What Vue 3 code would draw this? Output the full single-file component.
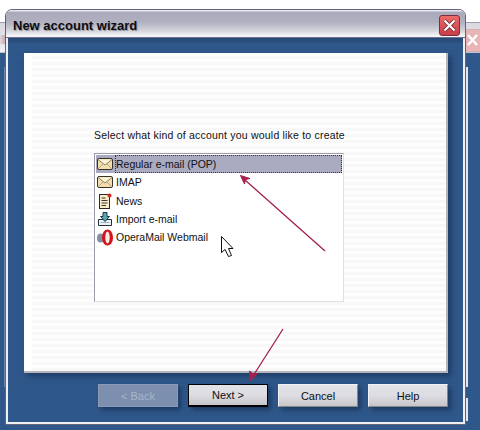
<script setup>
const rows = [
  { label: 'Regular e-mail (POP)', icon: 'mail', selected: true },
  { label: 'IMAP', icon: 'mail' },
  { label: 'News', icon: 'news' },
  { label: 'Import e-mail', icon: 'import' },
  { label: 'OperaMail Webmail', icon: 'opera' }
]
const buttons = [
  { label: '< Back', kind: 'disabled' },
  { label: 'Next >', kind: 'default' },
  { label: 'Cancel', kind: '' },
  { label: 'Help', kind: '' }
]
</script>

<template>
  <div class="stage">
    <div class="back-window">
      <div class="back-title"><span class="back-letter"></span></div>
      <div class="back-close">
        <svg width="14" height="20" viewBox="0 0 14 20">
          <path d="M2 5 L11 15 M11 5 L2 15" stroke="#fff" stroke-width="2.4" fill="none" />
        </svg>
      </div>
      <div class="back-strip strip-a"></div>
      <div class="back-strip strip-b"></div>
      <div class="back-strip strip-c"></div>
    </div>

    <div class="wizard">
      <header class="titlebar">
        <h1 class="title">New account wizard</h1>
        <button class="close" aria-label="Close">
          <svg width="19" height="19" viewBox="0 0 19 19">
            <path d="M4.5 4.5 L14.5 14.5 M14.5 4.5 L4.5 14.5" stroke="#6b2230" stroke-width="3.6" fill="none" />
            <path d="M4.5 4.5 L14.5 14.5 M14.5 4.5 L4.5 14.5" stroke="#fff" stroke-width="2.2" fill="none" />
          </svg>
        </button>
      </header>

      <main class="body">
        <section class="panel">
          <div class="stripes">
            <p class="prompt">Select what kind of account you would like to create</p>
            <ul class="list">
              <li v-for="row in rows" :key="row.label" class="row" :class="{ selected: row.selected }">
                <svg v-if="row.icon === 'mail'" class="icon" width="16" height="16" viewBox="0 0 16 16">
                  <rect x="0.5" y="2.5" width="15" height="11" rx="1.5" fill="#f3dfae" stroke="#35322a" />
                  <path d="M1 3.5 L8 9 L15 3.5" fill="#fdf4d8" stroke="#8d7f5c" />
                  <path d="M1.5 12.5 L6 8 M14.5 12.5 L10 8" stroke="#b9a678" fill="none" />
                </svg>
                <svg v-else-if="row.icon === 'news'" class="icon" width="16" height="16" viewBox="0 0 16 16">
                  <rect x="2.5" y="1.5" width="10" height="14" fill="#f8edc8" stroke="#2d2a24" />
                  <path d="M4.5 5 H8.5 M4.5 7.5 H10.5 M4.5 10 H10.5 M4.5 12.5 H9" stroke="#3c3a34" fill="none" />
                  <circle cx="12.5" cy="2.5" r="2" fill="#d42a2a" />
                </svg>
                <svg v-else-if="row.icon === 'import'" class="icon" width="16" height="16" viewBox="0 0 16 16">
                  <path d="M1.5 8.5 H14.5 V14.5 H1.5 Z" fill="#eef1f4" stroke="#22303a" />
                  <path d="M3.5 11.5 H12.5" stroke="#9fb2bf" fill="none" />
                  <path d="M6 1.5 H10 V5.5 H12.5 L8 10.5 L3.5 5.5 H6 Z" fill="#5aa6b4" stroke="#1f3a44" />
                </svg>
                <svg v-else class="icon" width="16" height="17" viewBox="0 0 16 17">
                  <ellipse cx="3.5" cy="9" rx="3.5" ry="4.5" fill="#7f8fa6" />
                  <ellipse cx="10.5" cy="8.5" rx="5.5" ry="8" fill="#d3141c" />
                  <ellipse cx="10.5" cy="8.5" rx="2.2" ry="6" fill="#fbe9e3" />
                </svg>
                <span class="row-label">{{ row.label }}</span>
              </li>
            </ul>
          </div>
        </section>

        <footer class="actions">
          <button v-for="b in buttons" :key="b.label" class="btn" :class="b.kind">{{ b.label }}</button>
        </footer>
      </main>
    </div>

    <svg class="overlay" width="480" height="430" viewBox="0 0 480 430">
      <path d="M325 251 L245 180" stroke="#a3214a" stroke-width="1.3" fill="none" />
      <path d="M240.5 175.5 L250 178.5 L245.5 179.5 L244.5 184 Z" fill="#a3214a" stroke="#a3214a" />
      <path d="M283 329 L253 376" stroke="#a3214a" stroke-width="1.3" fill="none" />
      <path d="M250 381 L249.5 371 L253 374 L257.5 373.5 Z" fill="#a3214a" stroke="#a3214a" />
      <path d="M221.5 236.5 V252.5 L225 249.5 L228.5 256.5 L231.5 255.5 L228.5 248.5 L233 248.5 Z" fill="#fff" stroke="#111" stroke-width="1" />
    </svg>
  </div>
</template>

<style scoped>
.stage {
  position: relative;
  width: 480px;
  height: 430px;
  overflow: hidden;
  background: #fff;
  font-family: "Liberation Sans", Arial, sans-serif;
  font-size: 11px;
  color: #111;
}
.back-window {
  position: absolute;
  left: -20px;
  top: 22px;
  width: 520px;
  height: 420px;
  background: repeating-linear-gradient(180deg, #315a8c 0 1px, #2d5588 1px 2px);
  border-top: 1px solid #9d9dae;
}
.back-title {
  height: 29px;
  background: linear-gradient(180deg, #d9d9e0, #e4e4ea 70%, #f2f2f5);
  border-bottom: 1px solid #bfc0cc;
}
.back-letter {
  position: absolute;
  left: 20px;
  top: 12px;
  width: 5px;
  height: 9px;
  background: linear-gradient(90deg, #d9d9e0, #cda9ae);
}
.back-close {
  position: absolute;
  left: 485px;
  top: 6px;
  width: 15px;
  height: 21px;
  background: #e8b4b6;
  border: 1px solid #d4adb4;
  border-right: 0;
  border-radius: 3px 0 0 3px;
}
.back-strip {
  position: absolute;
  background: #e4e6ec;
}
.strip-a {
  left: 24px;
  top: 44px;
  width: 1px;
  height: 320px;
  background: #6f88aa;
}
.strip-b {
  left: 486px;
  top: 44px;
  width: 2px;
  height: 320px;
}
.strip-c {
  left: 486px;
  top: 375px;
  width: 2px;
  height: 23px;
}
.wizard {
  position: absolute;
  left: 5px;
  top: 9px;
  width: 461px;
  height: 416px;
  box-sizing: border-box;
  display: flex;
  flex-direction: column;
  padding: 0 2px 2px;
  background: #eeeef3;
  border: 1px solid #62627c;
  border-radius: 7px 7px 0 0;
}
.titlebar {
  height: 28px;
  margin: 0 -2px;
  padding: 3px 5px 0 7px;
  box-sizing: border-box;
  display: flex;
  align-items: center;
  justify-content: space-between;
  background: linear-gradient(180deg, #e8e8ee 0 1px, #a9a9bc 2px, #b0b0c0 12px, #d0d1d8 20px, #f6f6f8 26px);
  border-bottom: 1px solid #6f6f88;
  border-radius: 6px 6px 0 0;
}
.title {
  margin: 0;
  font-size: 13px;
  font-weight: 700;
  color: #0c0c10;
  text-shadow: 1px 1px 1px #8e8e9e;
}
.close {
  width: 21px;
  height: 21px;
  padding: 0;
  display: flex;
  align-items: center;
  justify-content: center;
  background: linear-gradient(180deg, #ec6a68, #c83c48);
  border: 1px solid #7c2c3c;
  border-radius: 3px;
}
.body {
  flex: 1;
  display: flex;
  flex-direction: column;
  gap: 11px;
  padding: 15px 15px 0 16px;
  background:
    linear-gradient(180deg, #284a78 0, #2a4d7c 4px, transparent 5px),
    repeating-linear-gradient(180deg, #315a8c 0 1px, #2d5588 1px 2px);
}
.panel {
  height: 320px;
  box-sizing: border-box;
  background: #fff;
  border-right: 2px solid #b4b6bc;
  border-bottom: 2px solid #b4b6bc;
  padding: 3px 0 0 8px;
  box-shadow: 3px 3px 6px rgba(15, 32, 66, 0.55);
}
.stripes {
  height: 100%;
  box-sizing: border-box;
  padding: 71px 0 0 62px;
  background: repeating-linear-gradient(180deg, #f8f8f8 0 3px, #fefefe 3px 6px);
}
.prompt {
  margin: 0 0 10px;
  height: 16px;
  line-height: 16px;
  width: 260px;
  font-size: 10.5px;
  letter-spacing: 0.2px;
  white-space: nowrap;
}
.list {
  list-style: none;
  margin: 0;
  padding: 1px;
  width: 250px;
  height: 149px;
  box-sizing: border-box;
  background: #fff;
  border: 1px solid #9a9aa8;
  border-right-color: #e0e0e4;
  border-bottom-color: #e0e0e4;
}
.row {
  height: 18.25px;
  display: flex;
  align-items: center;
  padding-left: 1px;
  white-space: nowrap;
}
.selected {
  background: #aaaac0;
}
.icon {
  flex: none;
  width: 16px;
}
.row-label {
  margin-left: 3px;
  flex: 1;
  height: 18px;
  line-height: 18px;
  box-sizing: border-box;
  font-size: 10.5px;
}
.selected .row-label {
  border: 1px dotted #30304a;
  line-height: 16px;
  margin-left: 2px;
}
.actions {
  display: flex;
  justify-content: flex-end;
  gap: 10px;
}
.btn {
  width: 80px;
  height: 23px;
  padding: 0;
  font: inherit;
  color: #111;
  background: linear-gradient(180deg, #e2e2ea, #dcdce2 50%, #c6c6ca);
  border: 1px solid;
  border-color: #f2f2f6 #84848c #84848c #f2f2f6;
  box-shadow: 3px 3px 5px rgba(15, 32, 66, 0.55);
}
.btn.default {
  border: 1px solid #000;
  border-bottom-width: 2px;
}
.btn.disabled {
  background: #7c8fae;
  color: #a9b5ca;
  border-color: #8b9ab5;
}
.overlay {
  position: absolute;
  left: 0;
  top: 0;
  pointer-events: none;
}
</style>
